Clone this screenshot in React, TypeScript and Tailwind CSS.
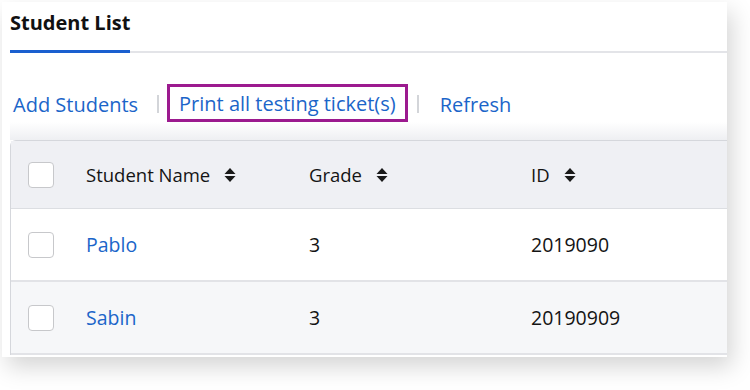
import React from 'react';

const font = { fontFamily: '"Open Sans", "Noto Sans", sans-serif' };

function SortIcon() {
  return (
    <svg width="12" height="16" viewBox="0 0 12 16" className="ml-[14px] shrink-0">
      <path d="M6 1 L11.5 7 H0.5 Z" fill="#1a1a1a" />
      <path d="M6 15 L11.5 9 H0.5 Z" fill="#1a1a1a" />
    </svg>
  );
}

function Checkbox() {
  return <div className="w-[26px] h-[26px] rounded-[4px] border-[1.5px] border-[#c7c8cb] bg-white" />;
}

const students = [
  { name: 'Pablo', grade: '3', id: '2019090' },
  { name: 'Sabin', grade: '3', id: '20190909' },
];

export default function App() {
  return (
    <div className="w-[750px] h-[390px] bg-white overflow-hidden pt-[2px] pl-[2px]" style={font}>
      <div className="w-[725px] h-[355px] bg-white shadow-[5px_10px_22px_rgba(0,0,0,0.17)] pl-[8px] overflow-hidden">
        {/* tabs */}
        <div className="relative h-[51px] border-b-2 border-[#e3e4e8]">
          <div className="absolute left-0 top-0 w-[120px] h-[51px] border-b-[3px] border-[#1a5fcf]">
            <div className="pt-[8px] text-[20px] leading-[26px] font-bold text-[#111] whitespace-nowrap">Student List</div>
          </div>
        </div>

        {/* toolbar */}
        <div className="flex items-center h-[38px] mt-[31px] text-[20px] text-[#1b65c9] whitespace-nowrap">
          <span className="ml-[3px] pt-[3px]">Add Students</span>
          <span className="w-[2px] h-[18px] bg-[#d3d5d9] ml-[19px] mr-[8px] mt-[2px]" />
          <span className="border-[3px] border-[#9c1a8f] h-[38px] px-[9px] pt-[2px] flex items-center">Print all testing ticket(s)</span>
          <span className="w-[2px] h-[18px] bg-[#d3d5d9] ml-[9px] mr-[21px] mt-[2px]" />
          <span className="pt-[3px]">Refresh</span>
        </div>
        <div className="h-[18px] bg-gradient-to-b from-white to-[#eeeff2]" />

        {/* table */}
        <div className="rounded-tl-[6px] border-l border-t border-[#d5d7dc] text-[18.5px] text-[#141414]">
          <div className="grid grid-cols-[75px_223px_222px_1fr] items-center h-[68px] bg-[#eff0f4] border-b border-[#dcdee2]">
            <div className="pl-[17px]"><Checkbox /></div>
            <div className="flex items-center">Student Name<SortIcon /></div>
            <div className="flex items-center">Grade<SortIcon /></div>
            <div className="flex items-center">ID<SortIcon /></div>
          </div>
          {students.map((s, i) => (
            <div
              key={s.id}
              className={`grid grid-cols-[75px_223px_222px_1fr] items-center h-[73px] text-[19.5px] border-b-2 border-[#e2e3e7] ${i % 2 ? 'bg-[#f6f7f9]' : 'bg-white'}`}
            >
              <div className="pl-[17px]"><Checkbox /></div>
              <div className="text-[#1b65c9]">{s.name}</div>
              <div>{s.grade}</div>
              <div>{s.id}</div>
            </div>
          ))}
        </div>
      </div>
    </div>
  );
}
